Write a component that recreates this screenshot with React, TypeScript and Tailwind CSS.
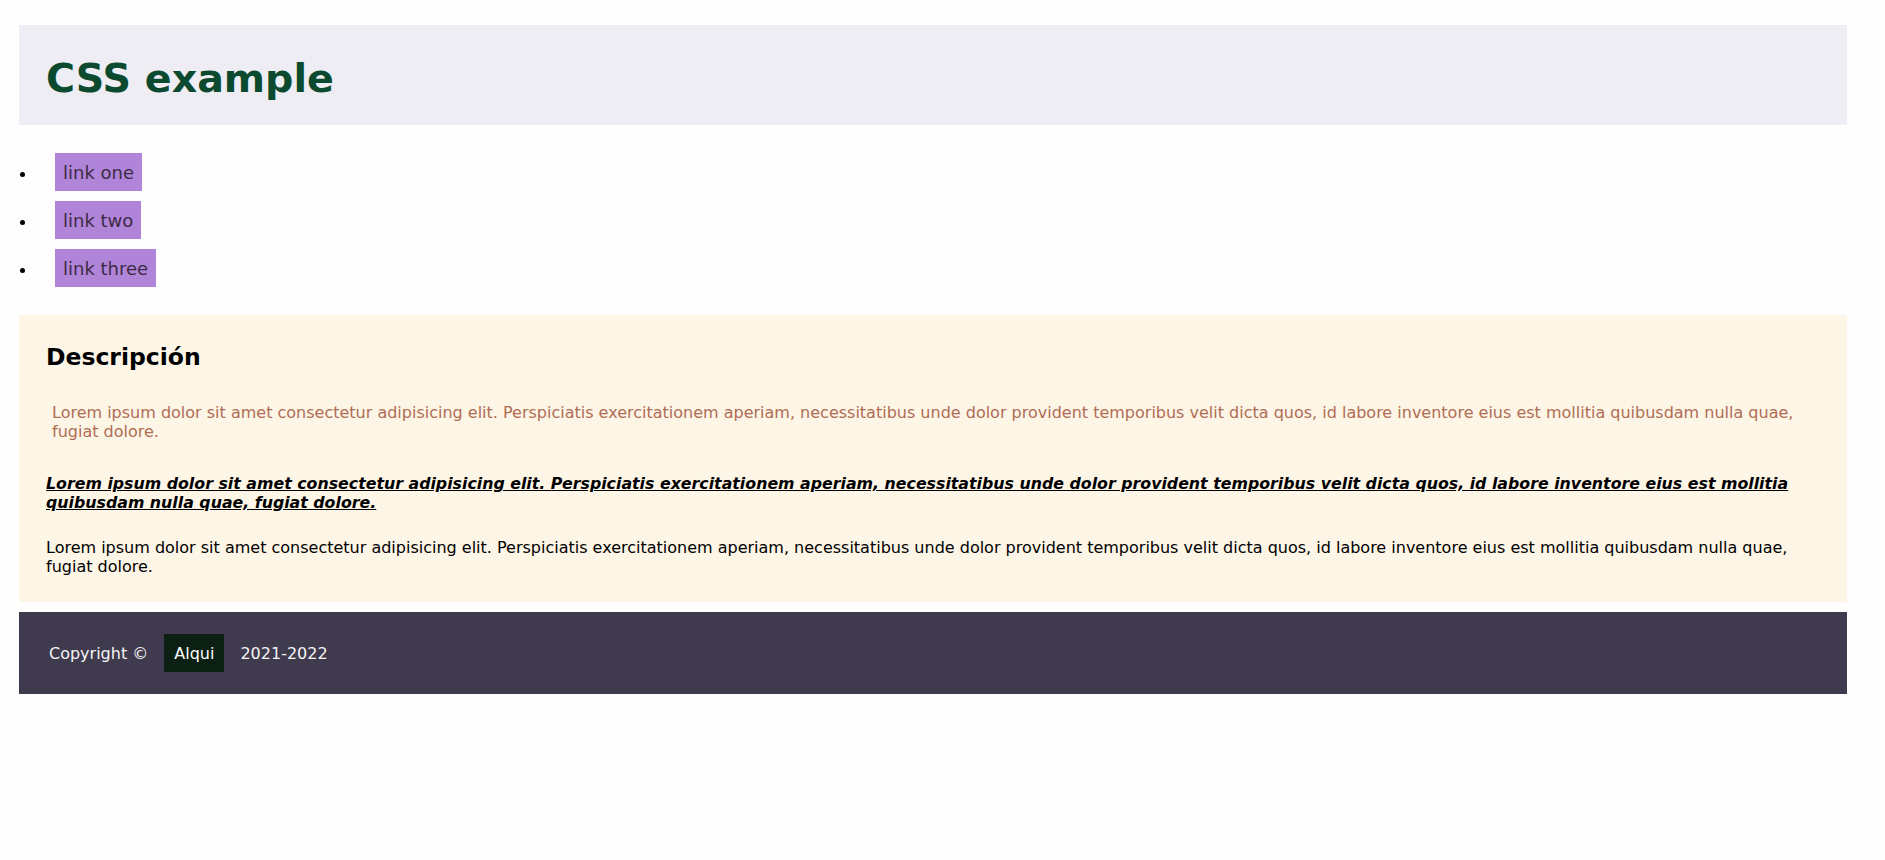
const links = ['link one', 'link two', 'link three']

const lorem =
    'Lorem ipsum dolor sit amet consectetur adipisicing elit. Perspiciatis exercitationem aperiam, necessitatibus unde dolor provident temporibus velit dicta quos, id labore inventore eius est mollitia quibusdam nulla quae, fugiat dolore.'

export default function App() {
    return (
        <div className="min-h-screen bg-[#fefefe] pt-[25px] font-['DejaVu_Sans',Verdana,sans-serif] text-[16px] text-black">
            {/* cabecera */}
            <header className="ml-[19px] mr-[38px] bg-[#eeedf4] pl-[27px] pt-[30px] pb-[23px]">
                <h1 className="text-[39.6px] leading-[47px] font-bold text-[#0b4a2f]">CSS example</h1>
            </header>

            {/* navegación */}
            <ul className="mt-[28px] flex flex-col gap-[10px] pl-[20px]">
                {links.map(link => (
                    <li key={link} className="flex items-center">
                        <span className="h-[5px] w-[5px] translate-y-[2px] rounded-full bg-black"></span>
                        <a
                            href="#"
                            className="ml-[30px] bg-[#b084d8] px-2 py-[8.5px] text-[18px] leading-[21px] text-[#3d2b45]"
                        >
                            {link}
                        </a>
                    </li>
                ))}
            </ul>

            {/* descripción */}
            <section className="mt-[28px] ml-[19px] mr-[38px] bg-[#fdf5e6] px-[27px] pt-[28px] pb-[26px]">
                <h2 className="text-[23.5px] leading-[28px] font-bold">Descripción</h2>
                <p className="mt-[26px] p-[6px] leading-[19px] text-[#b06d55]">{lorem}</p>
                <p className="mt-[27px] text-[15.8px] leading-[19px] font-bold italic underline">{lorem}</p>
                <p className="mt-[26px] leading-[19px]">{lorem}</p>
            </section>

            {/* pie */}
            <footer className="mt-[10px] ml-[19px] mr-[38px] flex items-center bg-[#3f3a4e] px-[30px] py-[22px] leading-[19px] text-[#f4f4f4]">
                <span>Copyright ©</span>
                <span className="mx-[16px] bg-[#0b1f12] px-[10px] py-[9.5px] text-white">Alqui</span>
                <span>2021-2022</span>
            </footer>
        </div>
    )
}
